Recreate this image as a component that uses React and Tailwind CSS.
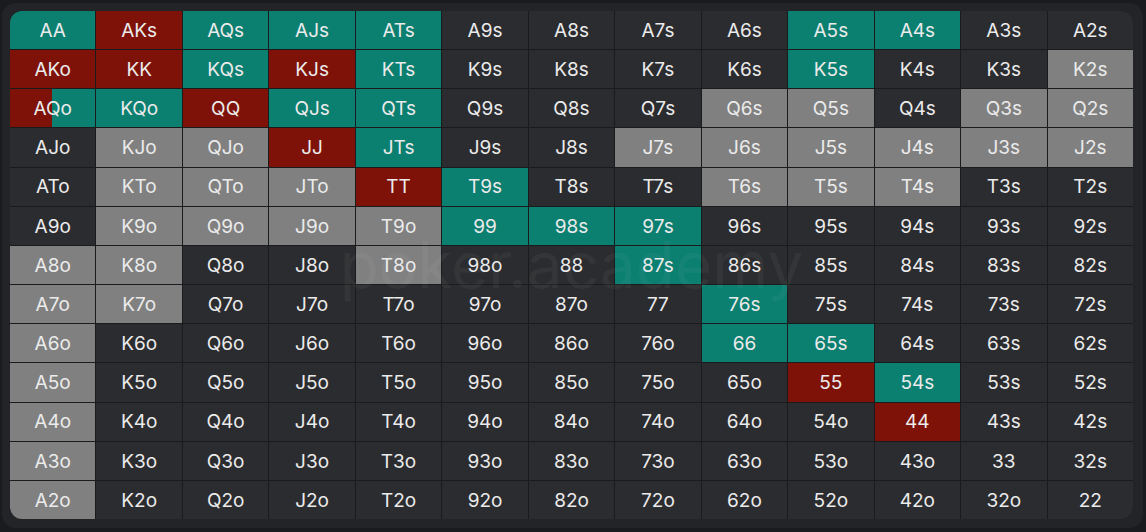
const RANKS = ['A', 'K', 'Q', 'J', 'T', '9', '8', '7', '6', '5', '4', '3', '2'];

// t = teal (raise), r = red (call), g = gray, d = dark, s = split red/teal
const MAP = [
    'trtttddddttdd',
    'rrtrtddddtddg',
    'strttdddggdgg',
    'dggrtddgggggg',
    'dgggrtddgggdd',
    'dggggtttddddd',
    'ggddgddtddddd',
    'ggddddddtdddd',
    'gdddddddttddd',
    'gddddddddrtdd',
    'gdddddddddrdd',
    'gdddddddddddd',
    'gdddddddddddd',
];

const CELL_BG = {
    t: 'bg-[#0b7f70]',
    r: 'bg-[#7e1209]',
    g: 'bg-[#808080]',
    d: 'bg-[#2b2c2f]',
    s: 'bg-[linear-gradient(90deg,#7e1209_50%,#0b7f70_50%)]',
};

const handName = (i, j) => {
    if (i === j) return RANKS[i] + RANKS[j];
    if (i < j) return RANKS[i] + RANKS[j] + 's';
    return RANKS[j] + RANKS[i] + 'o';
};

const Cell = ({ i, j }) => {
    const kind = MAP[i][j];
    return (
        <div className={`flex items-center justify-center pt-[2px] text-[19px] text-[#ebebeb] ${CELL_BG[kind]}`}>
            {handName(i, j)}
        </div>
    );
};

const App = () => {
    return (
        <div className="w-[1146px] h-[532px] bg-[#1a1b1e] pt-[3px] pl-[2px]" style={{ fontFamily: 'Inter, "Noto Sans", sans-serif' }}>
            <div className="w-[1141px] h-[525px] rounded-[14px] bg-[#232427] p-2">
                <div className="relative w-[1123px] h-[508px] rounded-[12px] overflow-hidden bg-[#1a1b1d] grid grid-cols-13 grid-rows-13 gap-px">
                    {RANKS.map((_, i) => RANKS.map((_, j) => <Cell key={i + '-' + j} i={i} j={j} />))}
                    <div className="pointer-events-none absolute inset-0 flex items-center justify-center">
                        <span className="text-[64px] text-white/[0.045]">poker.academy</span>
                    </div>
                </div>
            </div>
        </div>
    );
};

export default App;
